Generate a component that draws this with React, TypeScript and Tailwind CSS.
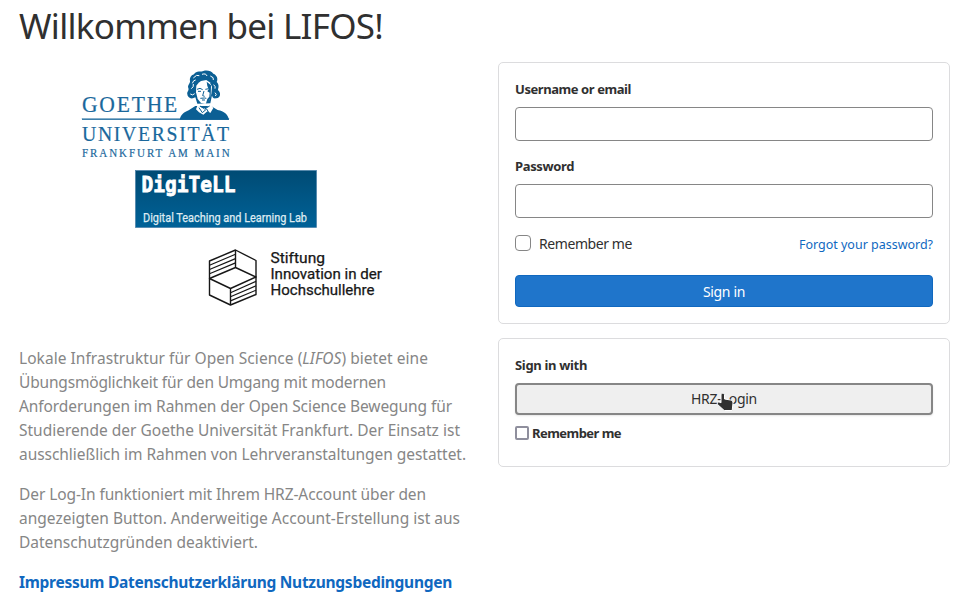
import { useLayoutEffect, useRef, useState } from "react";
import type { ReactNode } from "react";

// Keeps a single line of text at a fixed measure by adjusting its tracking.
function Line({ width, className = "", children }: { width: number; className?: string; children: ReactNode }) {
  const ref = useRef<HTMLSpanElement>(null);
  const [tracking, setTracking] = useState(0);
  useLayoutEffect(() => {
    const el = ref.current;
    if (!el) return;
    const count = el.textContent?.length ?? 1;
    setTracking((width - el.getBoundingClientRect().width) / count);
  }, [width]);
  return (
    <span ref={ref} className={`inline-block whitespace-nowrap ${className}`} style={{ letterSpacing: tracking }}>
      {children}
    </span>
  );
}

function Logos() {
  return (
    <svg className="block h-[260px] w-[340px]" viewBox="60 60 340 260">
      <g fill="#1a689c" stroke="#1a689c" strokeWidth=".2" fontFamily="'Liberation Serif', serif">
        <g transform="translate(82 0) scale(.92 1)">
          <text x="0" y="112" fontSize="23.5" textLength="103.5" lengthAdjust="spacing">GOETHE</text>
          <text x="0" y="141.500" fontSize="21.500" textLength="160" lengthAdjust="spacing">UNIVERSITÄT</text>
          <text x="0" y="157" fontSize="12" textLength="160.500" lengthAdjust="spacing">FRANKFURT AM MAIN</text>
        </g>
        <rect x="82" y="118.6" width="147" height="1.2" />
      </g>
      <g transform="translate(176 66) scale(.3333)">
        <path fill="#0b5f94" d="M11 161 C15 145 25 138 38 133 L58 120 L105 120 L125 132 C145 136 155 145 159 161Z" />
        <path fill="#0b5f94" d="M54 25 C61 12 77 19 82 15 C94 12 106 15 112 23 C123 27 127 39 122 48 C131 57 127 66 126 72 C136 81 134 95 121 97 C112 99 109 94 108 88 L103 112 L64 113 L58 94 C45 102 34 94 34 85 C32 77 40 74 37 66 C34 57 41 54 42 47 C40 36 44 28 54 25Z" />
        <path fill="white" d="M61 59 L68 50 L75 45 L91 42 L101 49 L108 62 L106 84 L100 102 L88 114 L75 111 L65 99 L60 79Z" />
        <path fill="white" d="M65 117 L80 126 L91 126 L103 115 L112 126 L103 141 L94 136 L82 146 L69 139 L60 130Z" />
        <path fill="#0b5f94" d="M92 47 L105 58 L104 95 L98 106 L90 112 L94 99 L100 92 L101 80 L94 76 L98 70 L94 60Z" />
        <path d="M63 70 l9-3 8 4 M66 76 l9 0 M88 70 l10-2 M84 75 l-4 14 6 2 M73 97 l12-1 6 1 M78 102 l9 0 M69 125 l10 15 13-11 9 15 M72 120 l14 9 15-9" fill="none" stroke="#0b5f94" strokeWidth="3" />
        <path d="M52 36 q10-12 18-7 M49 52 q3-10 10-10 M46 68 q8-5 6-14 M43 84 q7 6 13-1 M78 25 q12-4 15 5 M103 30 q12 4 9 12 M113 56 q7 6 4 12 M117 80 q7 6 1 10" fill="none" stroke="white" strokeWidth="3" />
      </g>

      <defs>
        <linearGradient id="digitell" x2="0" y2="1">
          <stop offset="0" stopColor="#004b74" />
          <stop offset="1" stopColor="#006298" />
        </linearGradient>
      </defs>
      <rect x="135.5" y="170.5" width="181" height="57" fill="url(#digitell)" stroke="#487fa7" strokeWidth=".7" />
      <text x="141.500" y="192" fontFamily="'DejaVu Sans Mono', monospace" fontWeight="700" fontSize="21.500" fill="white" stroke="white" strokeWidth=".8" strokeLinejoin="miter" textLength="94" lengthAdjust="spacingAndGlyphs">DigiTeLL</text>
      <text x="143" y="222.300" fontFamily="Roboto, sans-serif" fontSize="13" fill="#dfebf2" stroke="#dfebf2" strokeWidth=".25" textLength="164" lengthAdjust="spacingAndGlyphs">Digital Teaching and Learning Lab</text>

      <g fill="none" stroke="#171717" strokeWidth="1.4" strokeLinejoin="round">
        <path d="M209.500 261 L235.500 250 L256 260.500 V294.500 L230.500 305 L209.500 295Z" />
        <path d="M235.500 250 V267.500 L256 277 L230.500 288.500 L209.500 278.500 L235.500 267.500 M230.500 288.500 V305" />
        <path strokeWidth="1.2" d="M209.500 265.200 L235.500 254.300 M209.500 269.500 L235.500 258.600 M209.500 273.800 L235.500 262.900 M230.500 292.700 L256 281.400 M230.500 296.800 L256 285.800 M230.500 300.900 L256 290.200" />
      </g>
      <g fill="#171717" stroke="#171717" strokeWidth=".25" fontFamily="Roboto, sans-serif" fontSize="14">
        <text x="270.500" y="263" textLength="54.500" lengthAdjust="spacingAndGlyphs">Stiftung</text>
        <text x="270.500" y="279" textLength="111.500" lengthAdjust="spacingAndGlyphs">Innovation in der</text>
        <text x="270.500" y="295" textLength="104" lengthAdjust="spacingAndGlyphs">Hochschullehre</text>
      </g>
    </svg>
  );
}

function Pointer() {
  return (
    <svg className="absolute top-[7px] left-[199px] h-[20px] w-[19px]" viewBox="0 0 19 20">
      <path
        d="M5 3 C5 .8 8.500 .8 8.500 3 V7 L14.500 8 C16.600 8.400 17 9.500 17 11 L16.200 18.500 H8.200 L1.600 12.500 C.6 10.800 2.200 9.200 4 10.300 L5 10.800Z"
        fill="#303030"
        stroke="white"
        strokeWidth="1"
      />
    </svg>
  );
}

const card = "rounded-[5px] border border-[#dcdcde] bg-white px-4";
const field = "block h-[34px] w-full rounded border border-[#868686] bg-white px-3 outline-none";
const label = "block h-5 text-[13px] leading-5 font-bold";

export default function App() {
  return (
    <main className="h-[605px] w-[965px] overflow-hidden bg-white pl-[19px] font-['Noto_Sans',sans-serif] text-[#303030]">
      <h1 className="h-[62px] pt-[4px] text-[35px] leading-[44px] font-normal">
        <Line width={364}>Willkommen bei LIFOS!</Line>
      </h1>
      <div className="flex">
        <section className="w-[479px] shrink-0">
          <div className="-mt-[2px] h-[286px] pl-[41px]">
            <Logos />
          </div>
          <div className="flex flex-col gap-4 text-[15.5px] leading-6 text-[#868686]">
            <p className="flex flex-col items-start">
              <Line width={409}>Lokale Infrastruktur für Open Science (<em>LIFOS</em>) bietet eine</Line>
              <Line width={367}>Übungsmöglichkeit für den Umgang mit modernen</Line>
              <Line width={433}>Anforderungen im Rahmen der Open Science Bewegung für</Line>
              <Line width={441}>Studierende der Goethe Universität Frankfurt. Der Einsatz ist</Line>
              <Line width={447}>ausschließlich im Rahmen von Lehrveranstaltungen gestattet.</Line>
            </p>
            <p className="flex flex-col items-start">
              <Line width={407}>Der Log-In funktioniert mit Ihrem HRZ-Account über den</Line>
              <Line width={441}>angezeigten Button. Anderweitige Account-Erstellung ist aus</Line>
              <Line width={239}>Datenschutzgründen deaktiviert.</Line>
            </p>
            <p className="font-bold text-[#1068bf]">
              <Line width={433}>
                <a>Impressum</a> <a>Datenschutzerklärung</a> <a>Nutzungsbedingungen</a>
              </Line>
            </p>
          </div>
        </section>

        <section className="flex w-[452px] shrink-0 flex-col gap-[14px]">
          <form className={`${card} h-[262px] pt-4`}>
            <label className={label}><Line width={116}>Username or email</Line></label>
            <input className={`${field} mt-2`} />
            <label className={`${label} mt-[15px]`}><Line width={59}>Password</Line></label>
            <input className={`${field} mt-2`} type="password" />
            <div className="mt-[15px] flex h-5 items-center">
              <span className="h-4 w-4 rounded-[4px] border border-[#868686]" />
              <span className="ml-2 pt-[2px] text-[14px] leading-5"><Line width={93}>Remember me</Line></span>
              <a className="ml-auto pt-[3px] text-[12.5px] leading-5 text-[#1068bf]"><Line width={134}>Forgot your password?</Line></a>
            </div>
            <button type="button" className="mt-[22px] flex h-8 w-full items-center justify-center rounded-[4px] border border-[#1068bf] bg-[#1f75cb] text-[14px] text-white">
              <Line width={42}>Sign in</Line>
            </button>
          </form>

          <div className={`${card} h-[129px] pt-4`}>
            <div className={label}><Line width={72}>Sign in with</Line></div>
            <button type="button" className="relative mt-2 flex h-8 w-full items-center justify-center rounded-[4px] border-2 border-[#868686] bg-[#efefef] pb-[2px] text-[14px] shadow-[0_1px_2px_rgba(0,0,0,0.1)]">
              <Line width={66}>HRZ-Login</Line>
              <Pointer />
            </button>
            <div className="mt-[8px] flex h-5 items-center text-[13px] font-bold">
              <span className="h-[14px] w-[14px] rounded-[2px] border-2 border-[#8f8f9d]" />
              <span className="ml-[3px] leading-5"><Line width={89}>Remember me</Line></span>
            </div>
          </div>
        </section>
      </div>
    </main>
  );
}
